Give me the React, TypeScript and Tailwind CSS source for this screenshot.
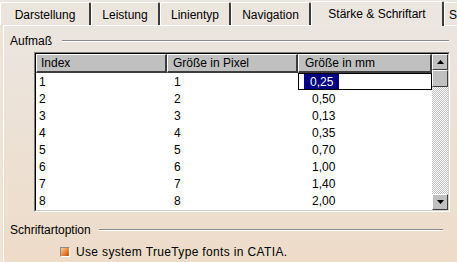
const tabs = [
  { label: 'Darstellung', w: 'w-[91px]' },
  { label: 'Leistung', w: 'w-[69px]' },
  { label: 'Linientyp', w: 'w-[71px]' },
  { label: 'Navigation', w: 'w-[80px]' },
]

const rows = [
  ['1', '1', '0,25'],
  ['2', '2', '0,50'],
  ['3', '3', '0,13'],
  ['4', '4', '0,35'],
  ['5', '5', '0,70'],
  ['6', '6', '1,00'],
  ['7', '7', '1,40'],
  ['8', '8', '2,00'],
]

function Arrow({ up }: { up?: boolean }) {
  return (
    <svg width="7" height="4" viewBox="0 0 7 4">
      {up ? <polygon points="0,4 7,4 3.5,0" fill="#000" /> : <polygon points="0,0 7,0 3.5,4" fill="#000" />}
    </svg>
  )
}

export default function App() {
  return (
    <div className="w-[457px] h-[262px] overflow-hidden flex flex-col bg-[#efe3d6] text-[12px] leading-none text-black font-['Liberation_Sans',Arial,sans-serif]">
      {/* Tab strip */}
      <div className="h-[25px] flex items-end bg-[#ebe5df]">
        {tabs.map((t) => (
          <div
            key={t.label}
            className={`${t.w} h-[23px] flex items-center justify-center pt-[1px] border-l border-t border-white border-r-2 border-r-[#3c3c3c] bg-[#ece5de] rounded-t-[2px]`}
          >
            {t.label}
          </div>
        ))}
        <div className="w-[133px] h-[25px] flex items-center justify-center pb-[1px] border-l border-t border-white border-r-2 border-r-[#3c3c3c] bg-[#ece6e0] rounded-t-[2px] relative z-10 -mb-[1px]">
          Stärke &amp; Schriftart
        </div>
        <div className="flex-1 h-[23px] flex items-center pl-[4px] pt-[1px] border-l border-t border-white bg-[#ece5de]">
          S
        </div>
      </div>

      {/* Panel */}
      <div className="flex-1 ml-[3px] border-l border-t border-white bg-gradient-to-b from-[#ebe5df] to-[#eedcc9] flex flex-col">
        <div className="h-[16px] mt-[7px] flex items-center pl-[6px]">
          <span>Aufmaß</span>
          <div className="ml-[10px] w-[387px] border-t border-[#8a8a8a] border-b border-b-white" />
        </div>

        {/* Table */}
        <div className="ml-[30px] mt-[3px] w-[416px] h-[160px] border border-t-[#808080] border-l-[#808080] border-b-white border-r-white">
          <div className="w-full h-full border border-t-black border-l-black border-b-[#d4d0c8] border-r-[#d4d0c8] bg-white flex">
            <div className="flex-1 flex flex-col">
              <div className="h-[19px] flex bg-[#c0c0c0]">
                <div className="w-[131px] flex items-center pl-[4px] border-r-2 border-b-2 border-r-[#3c3c3c] border-b-[#3c3c3c] border-t border-l border-t-white border-l-white">Index</div>
                <div className="w-[131px] flex items-center pl-[5px] border-r-2 border-b-2 border-r-[#3c3c3c] border-b-[#3c3c3c] border-t border-l border-t-white border-l-white">Größe in Pixel</div>
                <div className="flex-1 flex items-center pl-[6px] border-r-2 border-b-2 border-r-[#3c3c3c] border-b-[#3c3c3c] border-t border-l border-t-white border-l-white">Größe in mm</div>
              </div>
              {rows.map((r, i) => (
                <div key={r[0]} className="h-[17px] flex">
                  <div className="w-[131px] flex items-center pl-[3px]">{r[0]}</div>
                  <div className="w-[131px] flex items-center pl-[7px]">{r[1]}</div>
                  {i === 0 ? (
                    <div className="flex-1 flex items-center pl-[5px] border border-black">
                      <span className="bg-[#000080] text-white h-[15px] flex items-center px-[6px]">{r[2]}</span>
                    </div>
                  ) : (
                    <div className="flex-1 flex items-center pl-[14px]">{r[2]}</div>
                  )}
                </div>
              ))}
            </div>

            {/* Scrollbar */}
            <div className="w-[16px] flex flex-col bg-[repeating-conic-gradient(#c0c0c0_0_25%,#ffffff_0_50%)] bg-[length:2px_2px]">
              <div className="h-[16px] bg-[#c0c0c0] flex items-center justify-center border border-t-white border-l-white border-b-[#3c3c3c] border-r-[#3c3c3c]">
                <Arrow up />
              </div>
              <div className="h-[17px] bg-[#c0c0c0] border border-t-white border-l-white border-b-[#3c3c3c] border-r-[#3c3c3c]" />
              <div className="flex-1" />
              <div className="h-[16px] bg-[#c0c0c0] flex items-center justify-center border border-t-white border-l-white border-b-[#3c3c3c] border-r-[#3c3c3c]">
                <Arrow />
              </div>
            </div>
          </div>
        </div>

        <div className="h-[16px] mt-[10px] flex items-center pl-[6px]">
          <span>Schriftartoption</span>
          <div className="ml-[8px] w-[344px] border-t border-[#8a8a8a] border-b border-b-white" />
        </div>

        <div className="h-[16px] mt-[6px] flex items-center pl-[56px]">
          <div className="w-[10px] h-[10px] border border-t-[#8a8a8a] border-l-[#8a8a8a] border-b-white border-r-white bg-gradient-to-br from-[#fbd0a0] via-[#ec8a3c] to-[#b8500c]" />
          <span className="ml-[6px] tracking-[0.35px]">Use system TrueType fonts in CATIA.</span>
        </div>
      </div>
    </div>
  )
}
